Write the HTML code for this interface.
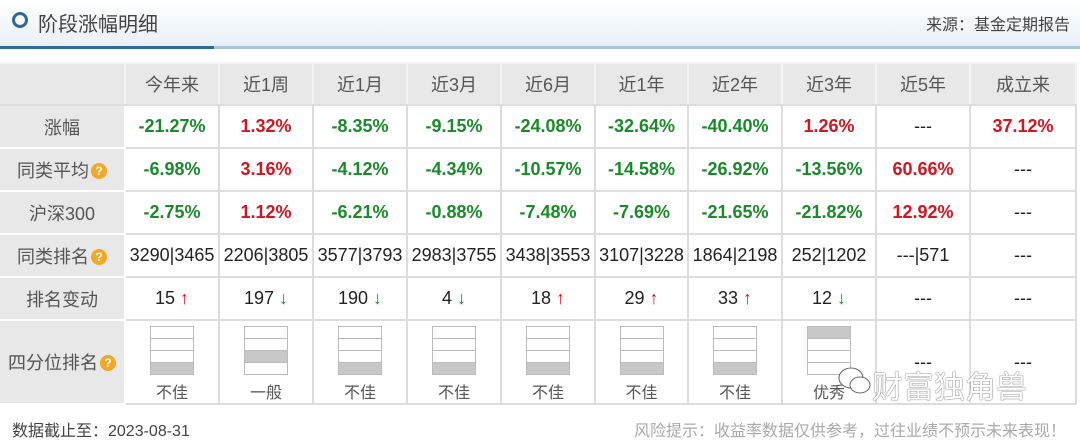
<!DOCTYPE html>
<html><head><meta charset="utf-8"><style>
body{margin:0;width:1080px;height:438px;background:#fff;font-family:"Liberation Sans","Noto Sans CJK SC",sans-serif;position:relative;overflow:hidden}
.hdr{position:absolute;left:0;top:0;width:1080px;height:46px;background:linear-gradient(#fff,#e9f0f7)}
.line1{position:absolute;left:0;top:46px;width:214px;height:3px;background:#2f6a98}
.line2{position:absolute;left:214px;top:46px;width:866px;height:3px;background:#a9c6df}
.circ{position:absolute;left:12px;top:12px;width:10px;height:10px;border:3px solid #2f6a98;border-radius:50%}
.ttl{position:absolute;left:38px;top:8px;font-size:20px;color:#444}
.src{position:absolute;right:10px;top:11px;font-size:16px;color:#444}
table{position:absolute;left:0;top:62px;border-collapse:collapse;table-layout:fixed}
td{border:2px solid #ddd;text-align:center;padding:0;font-size:18px;color:#222}
tr.h td{background:#e8e8e8;color:#555;height:40px;border-color:#f4f4f4;border-bottom-color:#ddd;font-size:18px}
td.l{background:#e8e8e8;color:#555;border-color:#fff;border-left:none;font-size:18px}
tr.r td{height:41px}
.g{color:#1a8a2a;font-weight:bold}.r_{color:#d4141e;font-weight:bold}
.q{display:inline-block;width:16px;height:16px;border-radius:50%;background:#f5a623;color:#fff;font-size:12px;line-height:16px;font-weight:bold;vertical-align:2px;margin-left:2px}
.up{color:#d4141e}.dn{color:#1a8a2a}
.box{width:42px;margin:4px auto 4px;border:1px solid #bbb}
.box div{height:11px;border-top:1px solid #bbb}.box div:first-child{border-top:none}
.box .f{background:#c8c8c8}
.lab{font-size:16px;color:#555}
.foot1{position:absolute;left:12px;top:417px;font-size:16px;color:#444}
.foot2{position:absolute;right:14px;top:417px;font-size:16px;color:#aaa}
.wm{position:absolute;left:872px;top:362px;font-size:31px;color:#fff;text-shadow:0 0 1px #555,0 0 1px #555}
</style></head><body>
<div class="hdr"></div><div class="line1"></div><div class="line2"></div>
<div class="circ"></div><div class="ttl">阶段涨幅明细</div><div class="src">来源：基金定期报告</div>
<table>
<colgroup><col style="width:125px"><col style="width:94px"><col style="width:94px"><col style="width:94px"><col style="width:94px"><col style="width:94px"><col style="width:93px"><col style="width:94px"><col style="width:94px"><col style="width:94px"><col style="width:106px"></colgroup>
<tr class="h"><td class="l"></td><td>今年来</td><td>近1周</td><td>近1月</td><td>近3月</td><td>近6月</td><td>近1年</td><td>近2年</td><td>近3年</td><td>近5年</td><td>成立来</td></tr>
<tr class="r"><td class="l">涨幅</td><td class="g">-21.27%</td><td class="r_">1.32%</td><td class="g">-8.35%</td><td class="g">-9.15%</td><td class="g">-24.08%</td><td class="g">-32.64%</td><td class="g">-40.40%</td><td class="r_">1.26%</td><td>---</td><td class="r_">37.12%</td></tr>
<tr class="r"><td class="l">同类平均<span class="q">?</span></td><td class="g">-6.98%</td><td class="r_">3.16%</td><td class="g">-4.12%</td><td class="g">-4.34%</td><td class="g">-10.57%</td><td class="g">-14.58%</td><td class="g">-26.92%</td><td class="g">-13.56%</td><td class="r_">60.66%</td><td>---</td></tr>
<tr class="r"><td class="l">沪深300</td><td class="g">-2.75%</td><td class="r_">1.12%</td><td class="g">-6.21%</td><td class="g">-0.88%</td><td class="g">-7.48%</td><td class="g">-7.69%</td><td class="g">-21.65%</td><td class="g">-21.82%</td><td class="r_">12.92%</td><td>---</td></tr>
<tr class="r"><td class="l">同类排名<span class="q">?</span></td><td>3290|3465</td><td>2206|3805</td><td>3577|3793</td><td>2983|3755</td><td>3438|3553</td><td>3107|3228</td><td>1864|2198</td><td>252|1202</td><td>---|571</td><td>---</td></tr>
<tr class="r"><td class="l">排名变动</td><td>15 <span class="up">↑</span></td><td>197 <span class="dn">↓</span></td><td>190 <span class="dn">↓</span></td><td>4 <span class="dn">↓</span></td><td>18 <span class="up">↑</span></td><td>29 <span class="up">↑</span></td><td>33 <span class="up">↑</span></td><td>12 <span class="dn">↓</span></td><td>---</td><td>---</td></tr>
<tr style="height:84px"><td class="l">四分位排名<span class="q">?</span></td>
<td><div class="box"><div></div><div></div><div></div><div class="f"></div></div><div class="lab">不佳</div></td>
<td><div class="box"><div></div><div></div><div class="f"></div><div></div></div><div class="lab">一般</div></td>
<td><div class="box"><div></div><div></div><div></div><div class="f"></div></div><div class="lab">不佳</div></td>
<td><div class="box"><div></div><div></div><div></div><div class="f"></div></div><div class="lab">不佳</div></td>
<td><div class="box"><div></div><div></div><div></div><div class="f"></div></div><div class="lab">不佳</div></td>
<td><div class="box"><div></div><div></div><div></div><div class="f"></div></div><div class="lab">不佳</div></td>
<td><div class="box"><div></div><div></div><div></div><div class="f"></div></div><div class="lab">不佳</div></td>
<td><div class="box"><div class="f"></div><div></div><div></div><div></div></div><div class="lab">优秀</div></td>
<td>---</td><td>---</td></tr>
</table>
<svg style="position:absolute;left:838px;top:366px" width="34" height="30"><ellipse cx="13" cy="12" rx="12" ry="10" fill="#fff" stroke="#666"/><ellipse cx="22" cy="19" rx="10" ry="8" fill="#fff" stroke="#666"/></svg>
<div class="wm">财富独角兽</div>
<div class="foot1">数据截止至：2023-08-31</div>
<div class="foot2">风险提示：收益率数据仅供参考，过往业绩不预示未来表现！</div>
</body></html>
